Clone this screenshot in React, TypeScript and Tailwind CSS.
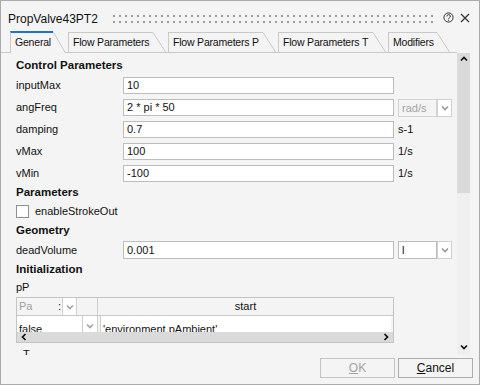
import React from "react";

type Dir = "up" | "down" | "left" | "right";

function Arrow({ dir, color }: { dir: Dir; color: string }) {
  const pts =
    dir === "up"
      ? "1,5.5 4,2.5 7,5.5"
      : dir === "down"
        ? "1,2.5 4,5.5 7,2.5"
        : dir === "left"
          ? "5.5,1 2.5,4 5.5,7"
          : "2.5,1 5.5,4 2.5,7";
  return (
    <svg width="8" height="8" viewBox="0 0 8 8" className="block">
      <polyline points={pts} fill="none" stroke={color} strokeWidth="1.7" />
    </svg>
  );
}

function Tab({ label, labelW, active }: { label: string; labelW: string; active?: boolean }) {
  return (
    <div className={`mr-[2px] flex shrink-0 ${active ? "relative z-10 -mb-px h-[22px]" : "h-[20px]"}`}>
      <div
        className={`flex items-center whitespace-nowrap border-l border-[#c9c9c9] bg-[#f4f4f4] pl-[4px] text-[10.5px] tracking-[-0.2px] ${labelW} ${
          active ? "border-t-2 border-t-[#1f74c3]" : "border-t"
        }`}
      >
        {label}
      </div>
      <svg width="13" height={active ? 22 : 20} className="block">
        <polygon points={`0,0.5 12.5,${active ? 22 : 20} 0,${active ? 22 : 20}`} fill="#f4f4f4" />
        <line x1="0" y1="0.5" x2="12.5" y2={active ? 22 : 20} stroke="#c9c9c9" strokeWidth="1" />
      </svg>
    </div>
  );
}

const ROWS = [
  { label: "inputMax", value: "10", unit: "" },
  { label: "angFreq", value: "2 * pi * 50", unit: "combo" },
  { label: "damping", value: "0.7", unit: "s-1" },
  { label: "vMax", value: "100", unit: "1/s" },
  { label: "vMin", value: "-100", unit: "1/s" },
];

function Combo({ text, disabled }: { text: string; disabled?: boolean }) {
  return (
    <div className="ml-[4px] flex">
      <div
        className={`h-[18px] w-[39px] border pl-[3px] leading-[16px] ${
          disabled ? "border-[#d2d2d2] bg-[#f4f4f4] text-[#a3a3a3]" : "border-[#bdbdbd] bg-white"
        }`}
      >
        {text}
      </div>
      <div className="flex h-[18px] w-[15px] items-center justify-center border border-[#cfcfcf] bg-white">
        <Arrow dir="down" color="#9a9a9a" />
      </div>
    </div>
  );
}

export default function App() {
  return (
    <div className="flex h-[385px] w-[480px] flex-col overflow-hidden border border-[#ababab] bg-[#f4f4f4] font-['Liberation_Sans',Arial,sans-serif] text-[11px] text-[#111]">
      {/* title bar */}
      <div className="flex h-[30px] shrink-0 items-center pl-[7px] pt-[6px]">
        <div className="w-[105px] whitespace-nowrap text-[12px] leading-[14px]">PropValve43PT2</div>
        <svg width="320" height="8" className="block">
          <defs>
            <pattern id="grip" width="6" height="6" patternUnits="userSpaceOnUse">
              <rect width="2" height="2" fill="#9c9c9c" />
            </pattern>
          </defs>
          <rect width="320" height="8" fill="url(#grip)" />
        </svg>
        <div className="-mt-[3px] ml-[10px] flex items-center gap-[6px]">
          <svg width="11" height="11" viewBox="0 0 11 11" className="block">
            <circle cx="5.5" cy="5.5" r="4.6" fill="none" stroke="#333" strokeWidth="1" />
            <path d="M3.9 4.4 A1.7 1.7 0 1 1 6.3 5.9 C5.7 6.2 5.5 6.5 5.5 7.1" fill="none" stroke="#333" strokeWidth="1" />
            <rect x="5" y="7.8" width="1" height="1" fill="#333" />
          </svg>
          <svg width="10" height="10" viewBox="0 0 10 10" className="block">
            <path d="M1 1 L9 9 M9 1 L1 9" stroke="#333" strokeWidth="1.2" />
          </svg>
        </div>
      </div>

      {/* tabs */}
      <div className="mr-[22px] flex h-[22px] shrink-0 items-end border-b border-[#c9c9c9] pl-[9px]">
        <Tab label="General" labelW="w-[43px]" active />
        <Tab label="Flow Parameters" labelW="w-[85px]" />
        <Tab label="Flow Parameters P" labelW="w-[95px]" />
        <Tab label="Flow Parameters T" labelW="w-[95px]" />
        <Tab label="Modifiers" labelW="w-[49px]" />
      </div>

      {/* body */}
      <div className="flex h-[302px] shrink-0">
        <div className="flex flex-1 flex-col overflow-hidden pl-[15px]">
          <div className="mt-[4px] flex h-[18px] shrink-0 items-center text-[11.5px] font-bold">Control Parameters</div>
          {ROWS.map((r) => (
            <div key={r.label} className="flex h-[22px] shrink-0 items-start pt-[2px]">
              <div className="w-[107px] leading-[17px]">{r.label}</div>
              <div className="h-[17px] w-[271px] border border-[#bdbdbd] bg-white pl-[3px] leading-[15px]">{r.value}</div>
              {r.unit === "combo" ? (
                <Combo text="rad/s" disabled />
              ) : r.unit ? (
                <div className="ml-[4px] leading-[17px]">{r.unit}</div>
              ) : null}
            </div>
          ))}
          <div className="flex h-[16px] shrink-0 items-center text-[11.5px] font-bold">Parameters</div>
          <div className="flex h-[21px] shrink-0 items-center">
            <div className="h-[13px] w-[13px] border border-[#8f8f8f] bg-white" />
            <span className="ml-[6px]">enableStrokeOut</span>
          </div>
          <div className="flex h-[18px] shrink-0 items-center text-[11.5px] font-bold">Geometry</div>
          <div className="flex h-[20px] shrink-0 items-start pt-[1px]">
            <div className="w-[107px] leading-[18px]">deadVolume</div>
            <div className="h-[18px] w-[271px] border border-[#bdbdbd] bg-white pl-[3px] leading-[16px]">0.001</div>
            <Combo text="l" />
          </div>
          <div className="flex h-[20px] shrink-0 items-center text-[11.5px] font-bold">Initialization</div>
          <div className="flex h-[14px] shrink-0 items-center">pP</div>

          {/* table */}
          <div className="mt-[3px] flex h-[46px] w-[378px] shrink-0 flex-col border border-[#c4c4c4]">
            <div className="flex h-[18px] shrink-0 border-b border-[#c8c8c8]">
              <div className="flex w-[45px] items-center justify-between pl-[2px] pr-[1px]">
                <span className="text-[#a0a0a0]">Pa</span>
                <span>:</span>
              </div>
              <div className="flex w-[15px] items-center justify-center border-x border-[#cfcfcf] bg-white">
                <Arrow dir="down" color="#a5a5a5" />
              </div>
              <div className="w-[21px] border-r border-[#cfcfcf]" />
              <div className="flex flex-1 items-center justify-center">start</div>
            </div>
            <div className="flex h-[16px] shrink-0 overflow-hidden">
              <div className="w-[66px] border-r border-[#cfcfcf] bg-white pl-[2px] pt-[6px] leading-[14px]">false</div>
              <div className="flex w-[15px] items-start justify-center border-r border-[#cfcfcf] bg-white pt-[6px]">
                <Arrow dir="down" color="#a5a5a5" />
              </div>
              <div className="ml-[2px] flex-1 border-l border-[#cfcfcf] bg-white pl-[2px] pt-[6px] leading-[14px]">
                'environment.pAmbient'
              </div>
              <div className="w-[2px]" />
            </div>
            <div className="flex flex-1 items-center justify-between bg-[#dadada] px-[3px]">
              <Arrow dir="left" color="#111" />
              <Arrow dir="right" color="#111" />
            </div>
          </div>
          <div className="mt-[4px] h-[14px] shrink-0 pl-[7px] leading-[14px]">T</div>
        </div>

        {/* vertical scrollbar */}
        <div className="flex w-[13px] shrink-0 flex-col">
          <div className="flex h-[140px] shrink-0 justify-center bg-[#dadada] pt-[2px]">
            <Arrow dir="up" color="#111" />
          </div>
          <div className="flex flex-1 items-end justify-center bg-[#efefef] pb-[4px]">
            <Arrow dir="down" color="#111" />
          </div>
        </div>
        <div className="w-[9px] shrink-0" />
      </div>

      {/* buttons */}
      <div className="flex flex-1 items-start justify-end gap-[3px] pr-[6px] pt-[3px]">
        <div className="flex h-[20px] w-[75px] items-center justify-center border border-[#c3c3c3] text-[12px] text-[#a3a3a3]">
          <span>
            <span className="underline">O</span>K
          </span>
        </div>
        <div className="flex h-[20px] w-[75px] items-center justify-center border border-[#adadad] text-[12px]">
          <span>
            <span className="underline">C</span>ancel
          </span>
        </div>
      </div>
    </div>
  );
}
